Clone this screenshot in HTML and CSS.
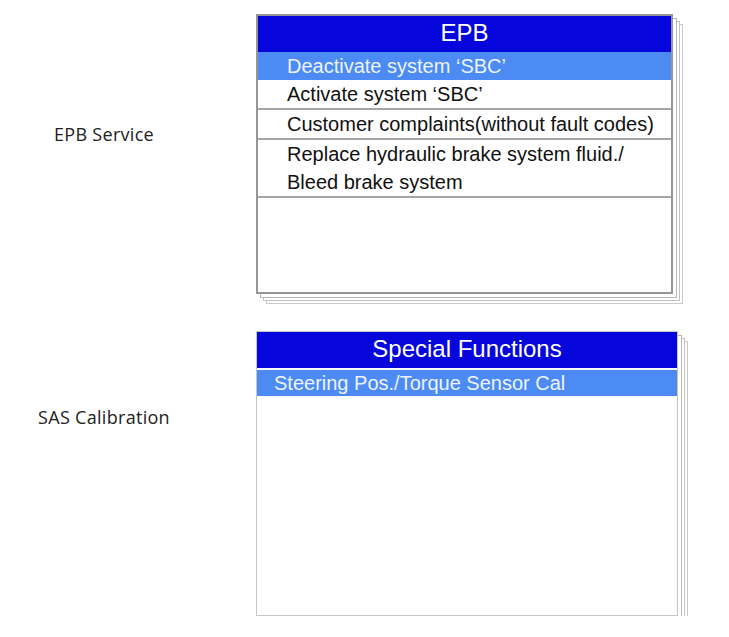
FILE: index.html
```html
<!DOCTYPE html>
<html>
<head>
  <meta charset="utf-8">
  <title>EPB and SAS functions</title>
  <meta name="viewport" content="width=device-width, initial-scale=1">
  <link rel="stylesheet" href="styles.css">
</head>
<body>
  <main class="page">
    <section class="entry entry-epb">
      <p class="entry-label">EPB Service</p>
      <div class="screen screen-epb">
        <h2 class="screen-title">EPB</h2>
        <ul class="menu">
          <li class="menu-item is-active">Deactivate system ‘SBC’</li>
          <li class="menu-item">Activate system ‘SBC’</li>
          <li class="menu-item">Customer complaints(without fault codes)</li>
          <li class="menu-item">Replace hydraulic brake system fluid./<br>Bleed brake system</li>
        </ul>
      </div>
    </section>

    <section class="entry entry-sas">
      <p class="entry-label">SAS Calibration</p>
      <div class="screen screen-sas">
        <h2 class="screen-title">Special Functions</h2>
        <ul class="menu">
          <li class="menu-item is-active">Steering Pos./Torque Sensor Cal</li>
        </ul>
      </div>
    </section>
  </main>
</body>
</html>
```

FILE: styles.css
```css
body {
  margin: 0;
  background: #fff;
  font-family: "Liberation Sans", Arial, sans-serif;
}
.page {
  padding-top: 14px;
}
.entry {
  display: grid;
  grid-template-columns: 208px auto;
  column-gap: 48px;
  align-items: start;
}
.entry-sas {
  margin-top: 37px;
}
.entry-label {
  margin: 0;
  text-align: center;
  font-family: "Open Sans", sans-serif;
  font-size: 18px;
  letter-spacing: 0.3px;
  line-height: 20px;
  color: #222;
}
.entry-epb .entry-label {
  padding-top: 110px;
}
.entry-sas .entry-label {
  padding-top: 76px;
}

/* screen with a stack of sheets behind it */
.screen {
  box-sizing: border-box;
  background: #fff;
  box-shadow:
    4px 4px 0 -1px #fff, 4px 4px 0 0 #b8b8b8,
    7px 7px 0 -1px #fff, 7px 7px 0 0 #c2c2c2,
    10px 10px 0 -1px #fff, 10px 10px 0 0 #cacaca;
}
.screen-epb {
  width: 417px;
  height: 280px;
  border: 2px solid #959595;
}
.screen-sas {
  width: 422px;
  height: 285px;
  border: 1px solid #c6c6c6;
}
.screen-title {
  margin: 0;
  height: 36px;
  line-height: 34px;
  background: #0606dc;
  color: #fff;
  text-align: center;
  font-size: 24px;
  font-weight: normal;
}
.menu {
  list-style: none;
  margin: 0;
  padding: 0;
}
.menu-item {
  padding-left: 29px;
  font-size: 20px;
  line-height: 28px;
  color: #111;
  border-bottom: 2px solid #a4a4a4;
}
.menu-item.is-active {
  background: #4b8bf3;
  color: #eef4ff;
  border-bottom: none;
}
.screen-sas .menu {
  padding-top: 2px;
}
.screen-sas .menu-item {
  padding-left: 17px;
  line-height: 26px;
}
```
